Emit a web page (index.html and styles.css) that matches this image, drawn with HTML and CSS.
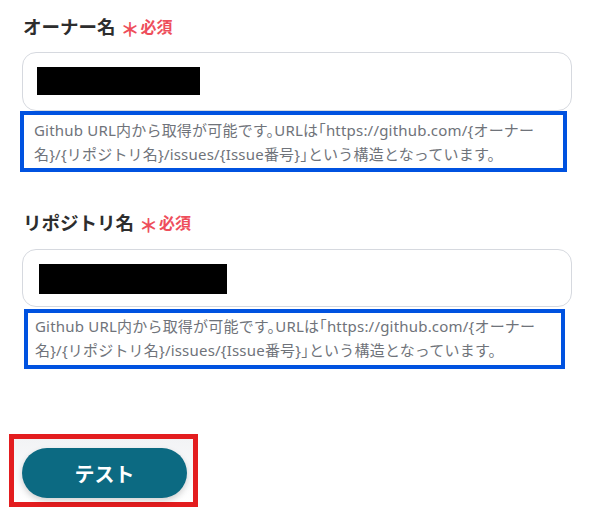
FILE: index.html
```html
<!DOCTYPE html>
<html lang="ja">
<head>
<meta charset="utf-8">
<link rel="stylesheet" href="styles.css">
</head>
<body>
<div class="form">
  <div class="field field-owner">
    <div class="label">オーナー名<span class="req"><span class="star">＊</span>必須</span></div>
    <div class="input"><span class="redact redact-owner"></span></div>
    <p class="hint hint-owner">Github URL内から取得が可能です。URLは「https://github.com/{オーナー名}/{リポジトリ名}/issues/{Issue番号}」という構造となっています。</p>
  </div>
  <div class="field field-repo">
    <div class="label">リポジトリ名<span class="req"><span class="star">＊</span>必須</span></div>
    <div class="input"><span class="redact redact-repo"></span></div>
    <p class="hint hint-repo">Github URL内から取得が可能です。URLは「https://github.com/{オーナー名}/{リポジトリ名}/issues/{Issue番号}」という構造となっています。</p>
  </div>
  <div class="actions">
    <div class="highlight"><button class="btn" type="button">テスト</button></div>
  </div>
</div>
</body>
</html>
```
FILE: styles.css
```css
* { box-sizing: border-box; }
html, body { margin: 0; padding: 0; background: #ffffff; }
body {
  width: 602px;
  height: 508px;
  overflow: hidden;
  font-family: "Noto Sans", "Noto Sans CJK JP", sans-serif;
  color: #333333;
}
.form { display: flex; flex-direction: column; }
.field { display: flex; flex-direction: column; align-items: flex-start; }
.field-owner { padding-top: 13px; }
.field-repo { padding-top: 37px; }
.label {
  margin-left: 23px;
  height: 26px;
  line-height: 26px;
  font-family: "Noto Sans CJK JP", sans-serif;
  font-weight: 700;
  font-size: 18.5px;
  color: #2d2d2d;
  display: flex;
  align-items: center;
}
.req {
  margin-left: 5px;
  font-size: 16px;
  font-weight: 700;
  color: #ee4e5b;
  display: flex;
  align-items: center;
}
.star { font-size: 19px; font-weight: 700; margin-right: 1px; line-height: 1; position: relative; top: 2px; }
.input {
  margin-top: 13px;
  margin-left: 22px;
  width: 550px;
  height: 59px;
  border: 1px solid #d6d9df;
  border-radius: 14px;
  background: #fff;
  padding: 14px 0 0 14px;
}
.field-repo .input { margin-top: 14px; height: 58px; padding: 14px 0 0 16px; }
.redact { display: block; background: #000; }
.redact-owner { width: 163px; height: 28px; }
.redact-repo { width: 188px; height: 30px; }
.hint {
  margin: 0;
  border: 4px solid #0052e0;
  font-size: 15px;
  line-height: 24px;
  letter-spacing: 0.2px;
  color: #6f737a;
  background: #fff;
  font-feature-settings: "halt";
}
.hint-owner { margin-left: 20px; width: 547px; height: 61px; padding: 3px 0 0 10px; }
.hint-repo { margin-left: 24px; margin-top: 2px; width: 541px; height: 60px; padding: 1px 0 0 7px; }
.actions { padding-top: 65px; padding-left: 9px; }
.highlight {
  width: 189px;
  height: 73px;
  border: 5px solid #e31d1f;
  padding: 9px 0 0 8px;
  background: linear-gradient(180deg, #f2f3f5 0%, #ffffff 100%);
}
.btn {
  width: 165px;
  height: 50px;
  border: none;
  border-radius: 25px;
  background: #0c6a82;
  color: #ffffff;
  font-family: "Noto Sans CJK JP", sans-serif;
  font-weight: 700;
  font-size: 20px;
  box-shadow: 0 3px 6px rgba(0, 0, 0, 0.18);
  padding: 0;
}
```
